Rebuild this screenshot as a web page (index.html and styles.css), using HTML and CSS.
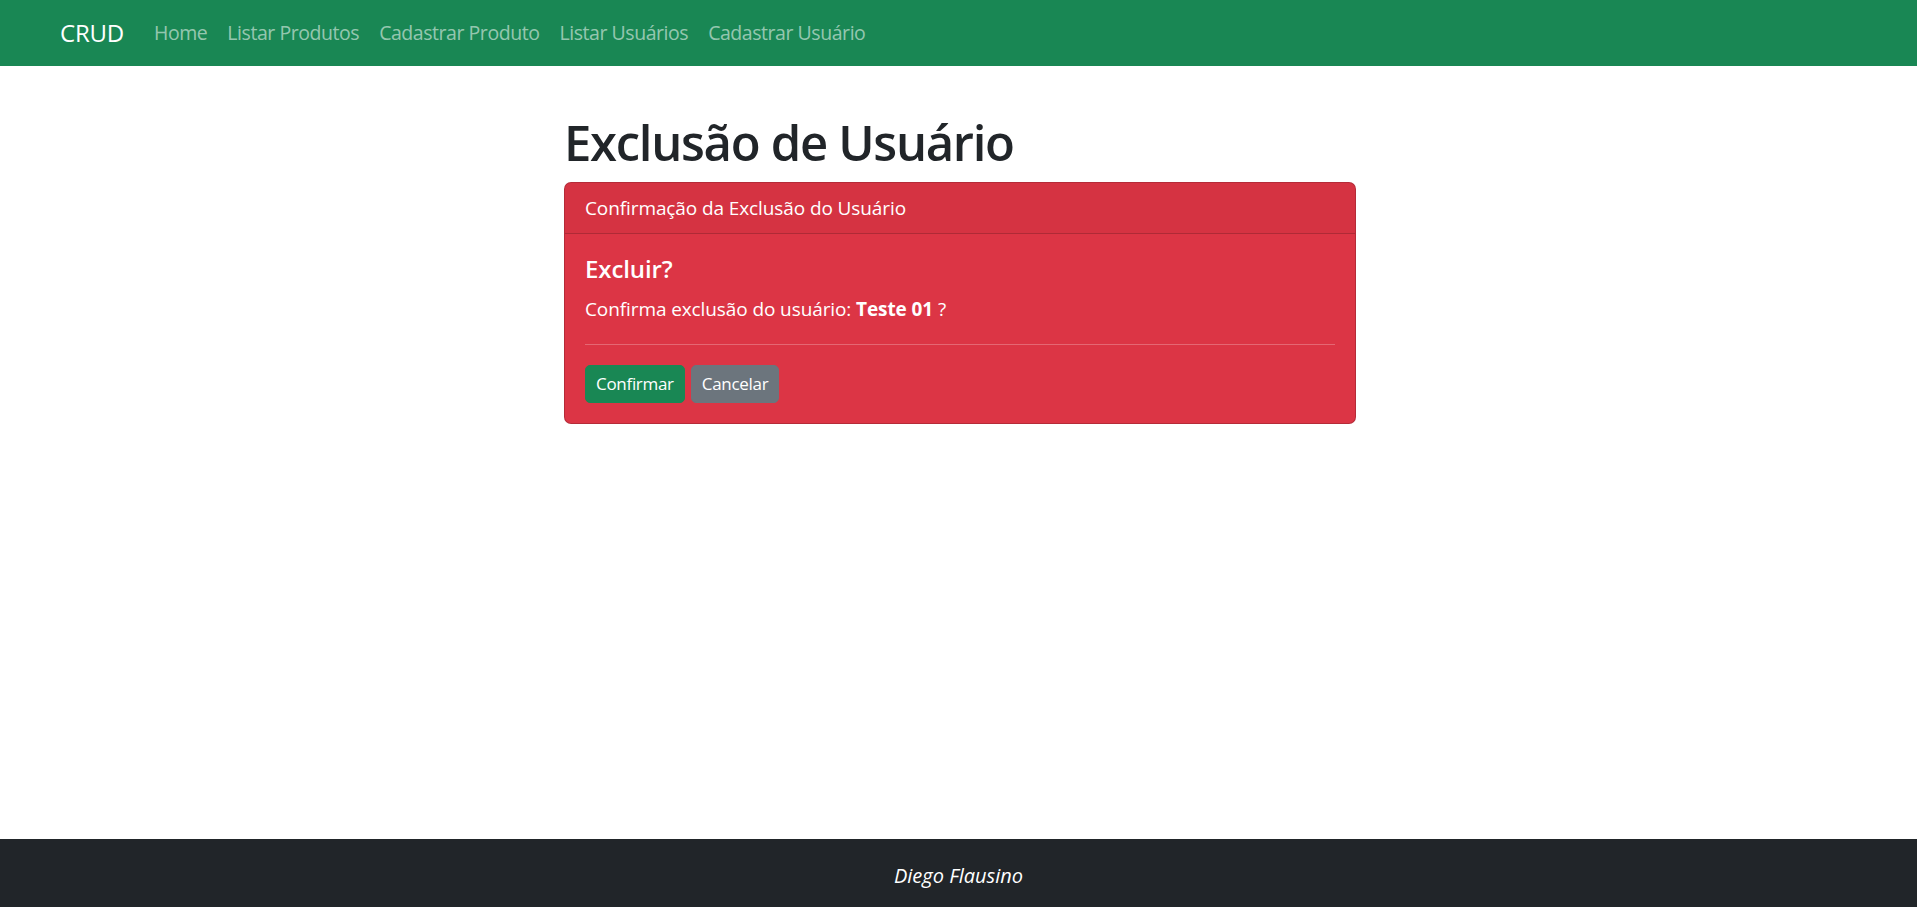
FILE: index.html
```html
<!DOCTYPE html>
<html lang="pt-BR">
<head>
<meta charset="utf-8">
<title>CRUD - Exclusão de Usuário</title>
<link rel="stylesheet" href="styles.css">
</head>
<body>
<nav class="navbar">
  <a class="brand" href="#">CRUD</a>
  <ul class="nav-links">
    <li><a href="#">Home</a></li>
    <li><a href="#">Listar Produtos</a></li>
    <li><a href="#">Cadastrar Produto</a></li>
    <li><a href="#">Listar Usuários</a></li>
    <li><a href="#">Cadastrar Usuário</a></li>
  </ul>
</nav>
<main class="main">
  <div class="content">
    <h1 class="title">Exclusão de Usuário</h1>
    <div class="card">
      <div class="card-header">Confirmação da Exclusão do Usuário</div>
      <div class="card-body">
        <h5 class="card-title">Excluir?</h5>
        <p class="card-text">Confirma exclusão do usuário: <b>Teste 01</b> ?</p>
        <hr class="divider">
        <div class="actions">
          <button class="btn btn-success" type="button">Confirmar</button>
          <button class="btn btn-secondary" type="button">Cancelar</button>
        </div>
      </div>
    </div>
  </div>
</main>
<footer class="footer">
  <em>Diego Flausino</em>
</footer>
</body>
</html>
```

FILE: styles.css
```css
* { box-sizing: border-box; }
html, body { margin: 0; padding: 0; }
body {
  font-family: "Open Sans", "Noto Sans", sans-serif;
  font-size: 20px;
  line-height: 30px;
  color: #212529;
  background: #fff;
  min-height: 100vh;
  display: flex;
  flex-direction: column;
  letter-spacing: -0.1px;
}
a { text-decoration: none; }

.navbar {
  height: 66px;
  background: #198754;
  display: flex;
  align-items: center;
  padding: 0 0 0 60px;
}
.brand {
  color: #fff;
  font-size: 24px;
  line-height: 36px;
  margin-right: 20px;
  letter-spacing: -0.2px;
}
.nav-links {
  list-style: none;
  margin: 0;
  padding: 0;
  display: flex;
}
.nav-links a {
  display: block;
  padding: 0 10px;
  color: rgba(255, 255, 255, 0.55);
  font-size: 19.5px;
  letter-spacing: -0.45px;
}

.main { flex: 1; }
.content {
  width: 792px;
  margin-left: calc(50% - 394.5px);
  padding-top: 46px;
}
.title {
  margin: 0 0 10px;
  font-size: 49px;
  line-height: 60px;
  font-weight: 600;
  letter-spacing: -1.3px;
}

.card {
  background: #dc3545;
  border: 1px solid rgba(0, 0, 0, 0.175);
  border-radius: 7px;
  color: #fff;
  overflow: hidden;
}
.card-header {
  padding: 10px 20px;
  background: rgba(0, 0, 0, 0.03);
  border-bottom: 1px solid rgba(0, 0, 0, 0.175);
  font-size: 19px;
}
.card-body { padding: 20px; }
.card-title {
  margin: 0 0 10px;
  font-size: 24px;
  line-height: 30px;
  font-weight: 600;
}
.card-text {
  margin: 0 0 20px;
  font-size: 19px;
}
.card-text b { font-weight: 700; }
.divider {
  margin: 0 0 20px;
  border: 0;
  border-top: 1px solid rgba(255, 255, 255, 0.25);
}
.actions { display: flex; gap: 6px; }
.btn {
  font-family: inherit;
  letter-spacing: -0.3px;
  font-size: 17px;
  line-height: 26px;
  padding: 5px 10px;
  border: 1px solid transparent;
  border-radius: 5px;
  color: #fff;
  cursor: pointer;
}
.btn-success { background: #198754; border-color: #198754; }
.btn-secondary { background: #6c757d; border-color: #6c757d; }

.footer {
  background: #212529;
  color: #fff;
  text-align: center;
  padding: 22px 0 16px;
  line-height: 30px;
  font-size: 20px;
  letter-spacing: 0;
}
```
